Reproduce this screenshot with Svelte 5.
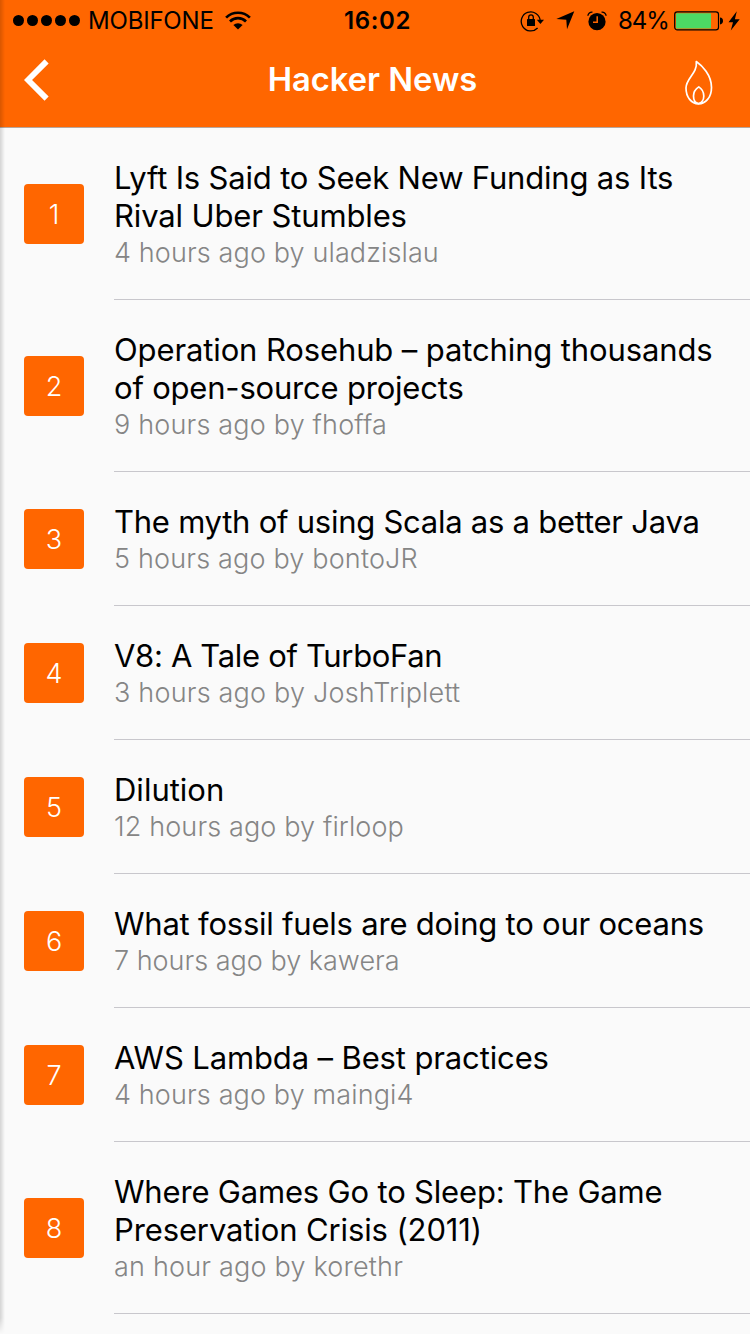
<script>
  const stories = [
    { lines: [['Lyft Is Said to Seek New Funding as Its', -0.18], ['Rival Uber Stumbles', -0.13]], meta: ['4 hours ago by uladzislau', 0.12] },
    { lines: [['Operation Rosehub – patching thousands', -0.12], ['of open-source projects', -0.2]], meta: ['9 hours ago by fhoffa', 0.18] },
    { lines: [['The myth of using Scala as a better Java', -0.25]], meta: ['5 hours ago by bontoJR', 0.17] },
    { lines: [['V8: A Tale of TurboFan', -0.33]], meta: ['3 hours ago by JoshTriplett', 0.2] },
    { lines: [['Dilution', 0]], meta: ['12 hours ago by firloop', 0.13] },
    { lines: [['What fossil fuels are doing to our oceans', -0.22]], meta: ['7 hours ago by kawera', 0] },
    { lines: [['AWS Lambda – Best practices', -0.13]], meta: ['4 hours ago by maingi4', 0.13] },
    { lines: [['Where Games Go to Sleep: The Game', -0.18], ['Preservation Crisis (2011)', -0.12]], meta: ['an hour ago by korethr', 0.2] }
  ];
</script>

<div class="screen">
  <header>
    <div class="status">
      <div class="carrier">
        <div class="signal">{#each Array(5) as _}<i></i>{/each}</div>
        <span class="network">MOBIFONE</span>
        <svg class="wifi" width="26" height="20" viewBox="0 0 26 20">
          <g fill="none" stroke="#000" stroke-width="2.7">
            <path d="M1.1 6.6 A17 17 0 0 1 24.9 6.6" />
            <path d="M5 10.5 A11.3 11.3 0 0 1 21 10.5" />
          </g>
          <path d="M13 18.6 L8.4 14 A6.6 6.6 0 0 1 17.6 14Z" />
        </svg>
      </div>
      <time>16:02</time>
      <div class="indicators">
        <svg class="lock" width="25" height="22" viewBox="0 0 25 22">
          <path d="M17.6 18 A9.5 9.5 0 1 1 20.2 10.5" fill="none" stroke="#000" stroke-width="1.3" />
          <path d="M16.8 9.8H24L20.4 14Z" />
          <rect x="7" y="9" width="8" height="7" rx=".6" />
          <path d="M8.7 9.5V7.2a2.3 2.3 0 0 1 4.6 0V9.5" fill="none" stroke="#000" stroke-width="1.3" />
        </svg>
        <svg class="arrow" width="19" height="19" viewBox="0 0 19 19"><path d="M18.3 .3 L11 18.3 L10.3 8.7 L.3 8.1Z" /></svg>
        <svg class="alarm" width="20" height="20" viewBox="0 0 20 20">
          <circle cx="10" cy="10.7" r="8.6" />
          <path d="M.9 4.8 A4 4 0 0 1 5.4 1.2 M19.1 4.8 A4 4 0 0 0 14.6 1.2" fill="none" stroke="#000" stroke-width="1.4" />
          <path d="M10.2 5.2V11.3H6" fill="none" stroke="#ff6600" stroke-width="1.5" />
        </svg>
        <span class="percent">84%</span>
        <svg class="battery" width="49" height="20" viewBox="0 0 49 20">
          <rect x=".7" y=".9" width="43.8" height="18" rx="2.6" fill="none" stroke="#000" stroke-width="1.2" />
          <rect x="2" y="2.3" width="35" height="15.2" rx=".8" fill="#4cd964" />
          <path d="M46 6.6c2 .2 3 1.4 3 3.4s-1 3.2-3 3.4Z" />
        </svg>
        <svg class="bolt" width="12" height="20" viewBox="0 0 12 20"><path d="M8.8 .2 L.5 11.2H5L2.8 19.6L11.7 8.2H6.9Z" /></svg>
      </div>
    </div>
    <nav>
      <svg class="back" width="26" height="42" viewBox="0 0 26 42"><path d="M22.6 2.4 L4 21 L22.6 39.6" fill="none" stroke="#fff" stroke-width="5.8" /></svg>
      <h1>Hacker News</h1>
      <svg class="flame" width="30" height="46" viewBox="0 0 30 46" fill="none" stroke="#fff" stroke-width="1.7" stroke-linejoin="round">
        <path d="M12.3 1.5 C18 5.5 27.5 15 27.5 27.4 C27.5 37.5 21.5 43.8 14.5 43.8 C7.5 43.8 2 37.2 2 28 C2 18 13.7 13.5 12.3 1.5Z" />
        <path d="M14.5 43.6 C11.5 43 9.5 39.8 9.5 36 C9.5 32 11.5 29 14.8 26.9 C18 29 19.8 32 19.8 36 C19.8 39.8 17.5 43 14.5 43.6Z" />
      </svg>
    </nav>
  </header>

  <main>
    {#each stories as story, index}
      <article>
        <div class="rank">{index + 1}</div>
        <div class="body">
          <h2>{#each story.lines as [text, tracking]}<span style:letter-spacing="{tracking}px">{text}</span>{/each}</h2>
          <p style:letter-spacing="{story.meta[1]}px">{story.meta[0]}</p>
        </div>
      </article>
    {/each}
  </main>
  <div class="edge"></div>
</div>

<style>
  :global(body) { background: #fafafa; overflow: hidden; }
  .screen {
    position: relative;
    width: 750px;
    height: 1334px;
    overflow: hidden;
    background: #fafafa;
    font-family: Inter, "Liberation Sans", sans-serif;
    color: #000;
  }
  header { box-sizing: border-box; height: 128px; background: #ff6600; border-bottom: 1px solid #b6a79e; }
  svg { display: block; flex: none; }
  .status { display: grid; grid-template-columns: 344px 1fr 230px; height: 40px; font-size: 24px; line-height: 42px; }
  .carrier, .indicators { display: flex; align-items: center; height: 41px; }
  .carrier { padding-left: 13px; }
  .signal { display: flex; gap: 3px; width: 67px; }
  .signal i { width: 11px; height: 11px; border-radius: 50%; background: #000; }
  .network { width: 126px; margin-left: 8px; white-space: nowrap; letter-spacing: -.2px; }
  .wifi { margin-left: 11px; }
  time { font-weight: 600; letter-spacing: .6px; }
  .arrow { margin-left: 11px; }
  .alarm { margin-left: 12px; }
  .percent { margin-left: 11px; width: 50px; letter-spacing: -1px; }
  .battery { margin-left: 6px; }
  .bolt { margin-left: 5px; }
  nav { display: grid; grid-template-columns: 26px 1fr 30px; align-items: center; height: 80px; padding: 0 36px 0 24px; }
  h1 { margin: -2px 0 0 11px; color: #fff; font-size: 32.7px; font-weight: 600; text-align: center; }
  .flame { margin-top: 5px; }
  article { display: flex; align-items: center; padding-left: 24px; }
  .rank {
    flex: none;
    box-sizing: border-box;
    width: 60px;
    height: 60px;
    margin-right: 30px;
    border-radius: 4px;
    background: #ff6600;
    color: #fff;
    font-size: 27px;
    font-weight: 300;
    line-height: 62px;
    text-align: center;
  }
  .body { flex: 1; padding: 31px 0 28px; border-bottom: 1px solid #c8c7cc; white-space: nowrap; }
  h2 { margin: 0; font-size: 31px; font-weight: 400; line-height: 38px; }
  h2 span { display: block; width: max-content; }
  p { margin: 0; font-size: 27px; font-weight: 300; line-height: 36px; color: #858585; width: max-content; }
  .edge {
    position: absolute;
    inset: 0 auto 0 0;
    width: 5px;
    background: linear-gradient(90deg, rgba(0,0,0,.15), rgba(0,0,0,0));
    mask-image: linear-gradient(#000 calc(100% - 16px), transparent);
  }
</style>
